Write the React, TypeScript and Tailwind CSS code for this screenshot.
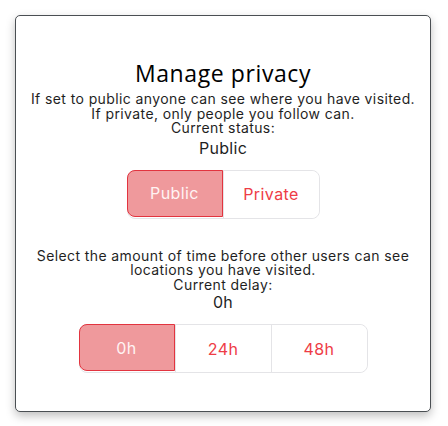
import { useState } from 'react';

const options = ['Public', 'Private'];
const delays = ['0h', '24h', '48h'];

function Segmented({
  items,
  value,
  onChange,
}: {
  items: string[];
  value: string;
  onChange: (v: string) => void;
}) {
  return (
    <div className="flex rounded-lg border border-[#e4e4e7]">
      {items.map((item, i) => {
        const active = item === value;
        return (
          <button
            key={item}
            type="button"
            onClick={() => onChange(item)}
            className={[
              'h-[47px] w-[96px] text-[16px] tracking-[0.4px]',
              i === 0 ? 'rounded-l-lg' : '',
              i === items.length - 1 ? 'rounded-r-lg' : '',
              i > 0 && !active ? 'border-l border-[#e4e4e7]' : '',
              active
                ? '-my-px -ml-px border border-[#e2343f] bg-[#ef999c] text-[#fff3f3]'
                : 'bg-white text-[#ee3c46]',
            ].join(' ')}
          >
            {item}
          </button>
        );
      })}
    </div>
  );
}

export default function App() {
  const [status, setStatus] = useState('Public');
  const [delay, setDelay] = useState('0h');

  return (
    <div className="h-[426px] w-[448px] bg-white pl-[15px] pt-[15px] font-['Inter',sans-serif] text-[#1f1f1f]">
      <div className="flex h-[397px] w-[416px] flex-col items-center rounded-[5px] border-[1.5px] border-[#4a4f53] bg-white shadow-[0_4px_10px_rgba(0,0,0,0.25)]">
        <h1 className="mt-[44px] font-['Open_Sans',sans-serif] text-[23px] leading-[26px] tracking-[0.6px] text-black">
          Manage privacy
        </h1>
        <p className="mt-[6px] text-center text-[14px] leading-[14.5px] tracking-[0.4px]">
          If set to public anyone can see where you have visited.
          <br />
          If private, only people you follow can.
          <br />
          Current status:
        </p>
        <p className="mt-[3px] text-[16px] leading-[19px] tracking-[0.3px]">{status}</p>
        <div className="mt-[12px]">
          <Segmented items={options} value={status} onChange={setStatus} />
        </div>
        <p className="mt-[30px] text-center text-[14px] leading-[14.5px] tracking-[0.4px]">
          Select the amount of time before other users can see
          <br />
          locations you have visited.
          <br />
          Current delay:
        </p>
        <p className="mt-[1px] text-[16px] leading-[19px] tracking-[0.3px]">{delay}</p>
        <div className="mt-[12px]">
          <Segmented items={delays} value={delay} onChange={setDelay} />
        </div>
      </div>
    </div>
  );
}
